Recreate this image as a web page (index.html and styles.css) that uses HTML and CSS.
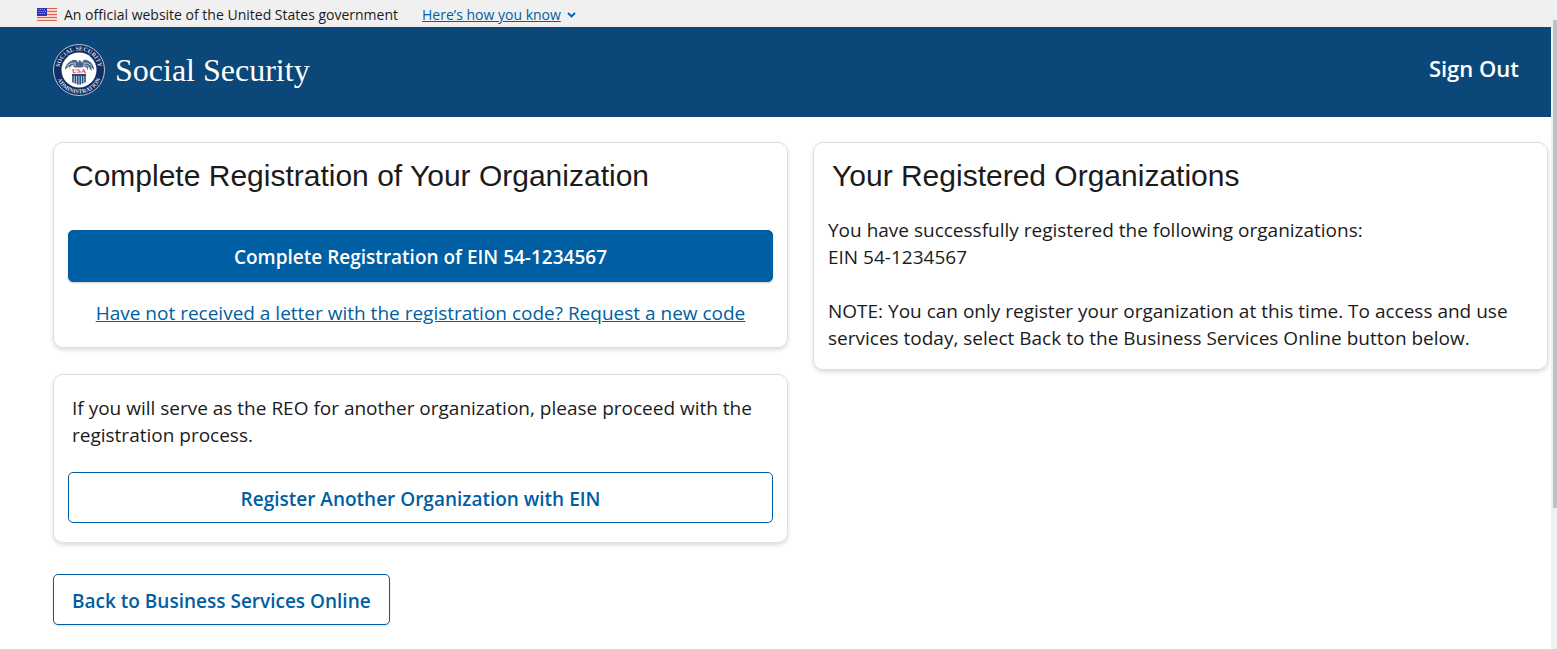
FILE: index.html
```html
<!DOCTYPE html>
<html lang="en">
<head>
    <meta charset="utf-8">
    <meta name="viewport" content="width=device-width, initial-scale=1">
    <title>Social Security</title>
    <link rel="stylesheet" href="styles.css">
</head>
<body>
  <div class="page">
    <div class="gov-banner">
      <svg class="flag" viewBox="0 0 20 13" aria-hidden="true">
        <rect width="20" height="13" fill="#fbd5cf"/>
        <path d="M0 .5h20M0 3.500h20M0 6.500h20M0 9.500h20M0 12.500h20" stroke="#e0604c"/>
        <rect width="10" height="8" fill="#2d36b8"/>
        <path d="M1 1.500h8M2 3.500h7M1 5.500h8" stroke="#8f95dc" stroke-dasharray="1 1"/>
      </svg>
      <span>An official website of the United States government</span>
      <button type="button" class="gov-link"><span>Here’s how you know</span>
        <svg class="chevron" viewBox="0 0 9 6" aria-hidden="true"><path d="M1 1l3.500 3.500L8 1" fill="none" stroke="#005ea2" stroke-width="1.800"/></svg>
      </button>
    </div>

    <header class="header">
      <a class="brand" href="#">
        <svg class="seal" viewBox="0 0 52 52" aria-hidden="true">
          <defs>
            <path id="arc-top" d="M6.500 26a19.500 19.500 0 0 1 39 0"/>
            <path id="arc-bottom" d="M2.500 26a23.500 23.500 0 0 0 47 0"/>
          </defs>
          <circle cx="26" cy="26" r="25.500" fill="#112e62" stroke="#b4c2d5"/>
          <circle cx="26" cy="26" r="17.500" fill="#fff"/>
          <text class="seal-ring"><textPath href="#arc-top" startOffset="50%" text-anchor="middle">SOCIAL SECURITY</textPath></text>
          <text class="seal-ring"><textPath href="#arc-bottom" startOffset="50%" text-anchor="middle">ADMINISTRATION</textPath></text>
          <!-- eagle -->
          <path d="M12 26q0-7 8-10 4-1 5 3l1-3 2 1 1 2q1-4 5-3 7 3 7 10l-3-3 1 4-4-4v3l-4-4-2 2h-7l-3-3-3 4v-3l-4 4 1-4z" fill="#47658a"/>
          <path d="M14 22q4-4 9-3M16 24q4-4 7-3M39 22q-4-4-9-3M37 24q-4-4-7-3" fill="none" stroke="#dbe3ec" stroke-width=".800"/>
          <!-- shield -->
          <path d="M19 29h14v9q-3 2-7 3-4-1-7-3z" fill="#d3dce7"/>
          <path d="M20 30v8.500M22.400 30v9.500M24.800 30v10.500M27.200 30v10.500M29.600 30v9.500M32 30v8.500" stroke="#234a78" stroke-width="1.500"/>
          <path d="M19 31h14" stroke="#234a78" stroke-width="2"/>
          <rect x="18" y="23.500" width="16" height="6" fill="#fff"/>
          <text class="seal-usa" x="26" y="29" text-anchor="middle">USA</text>
        </svg>
        <span>Social Security</span>
      </a>
      <a class="sign-out" href="#">Sign Out</a>
    </header>

    <main class="content">
      <div class="column">
        <section class="card">
          <h2>Complete Registration of Your Organization</h2>
          <button type="button" class="btn btn-primary">Complete Registration of EIN 54-1234567</button>
          <a class="code-link" href="#">Have not received a letter with the registration code? Request a new code</a>
        </section>
        <section class="card">
          <p class="intro">If you will serve as the REO for another organization, please proceed with the registration process.</p>
          <button type="button" class="btn">Register Another Organization with EIN</button>
        </section>
        <button type="button" class="btn btn-back">Back to Business Services Online</button>
      </div>

      <div class="column">
        <section class="card card-list">
          <h2>Your Registered Organizations</h2>
          <p>You have successfully registered the following organizations:<br>EIN 54-1234567</p>
          <p class="note">NOTE: You can only register your organization at this time. To access and use services today, select Back to the Business Services Online button below.</p>
        </section>
      </div>
    </main>
  </div>

  <div class="scrollbar" aria-hidden="true"><div class="thumb"></div></div>
</body>
</html>
```
FILE: styles.css
```css
*{
    box-sizing: border-box;
}
body{
    margin: 0;
    display: flex;
    min-height: 100vh;
    background: #fff;
    color: #1b1b1b;
    font-family: "Open Sans", "Segoe UI", sans-serif;
    font-size: 19px;
    line-height: 27px;
}
.page{
    flex: 1;
    min-width: 0;
}
button{
    font-family: inherit;
    cursor: pointer;
}
p{
    margin: 0;
}

.gov-banner{
    display: flex;
    align-items: center;
    height: 27px;
    padding: 2px 37px 0;
    background: #f0f0f0;
    font-size: 14px;
}
.flag{
    width: 20px;
    height: 13px;
    margin-right: 7px;
}
.gov-link{
    display: flex;
    align-items: center;
    gap: 6px;
    margin-left: 24px;
    padding: 0;
    border: 0;
    background: none;
    color: #005ea2;
    font-size: 14px;
    text-decoration: underline;
}
.chevron{
    width: 9px;
    height: 6px;
}

.header{
    display: flex;
    justify-content: space-between;
    align-items: center;
    height: 90px;
    padding: 0 32px 4px 53px;
    background: #0b4778;
}
.header a{
    color: #fff;
    text-decoration: none;
}
.brand{
    display: flex;
    align-items: center;
    gap: 10px;
    font-family: Georgia, "Liberation Serif", serif;
    font-size: 32px;
}
.seal{
    width: 52px;
    height: 52px;
}
.seal-ring{
    fill: #d5dce8;
    font: bold 6px "Liberation Serif", serif;
}
.seal-usa{
    fill: #e0304a;
    font: bold 7px "Liberation Serif", serif;
}
.sign-out{
    padding-bottom: 4px;
    font-size: 22px;
    font-weight: 600;
}

.content{
    display: grid;
    grid-template-columns: 1fr 1fr;
    gap: 25px;
    padding: 25px 3px 24px 53px;
}
.column{
    display: flex;
    flex-direction: column;
    align-items: flex-start;
    gap: 26px;
}
.card{
    width: 100%;
    padding: 14px 14px 19px;
    border: 1px solid #dcdee0;
    border-radius: 10px;
    box-shadow: 0 2px 4px rgba(0,0,0,.15);
}
.card-list{
    padding-bottom: 17px;
}
.card h2{
    margin: 0 4px 35px;
    font-family: "Liberation Sans", Arial, sans-serif;
    font-size: 30px;
    font-weight: 400;
    line-height: 38px;
}
.card-list h2{
    margin-bottom: 22px;
}
.btn{
    width: 100%;
    height: 51px;
    padding: 2px 18px 0;
    border: 1px solid #005ea2;
    border-radius: 5px;
    background: #fff;
    color: #005ea2;
    font-size: 19px;
    font-weight: 600;
}
.btn-primary{
    height: 52px;
    background: #005ea2;
    color: #fff;
    box-shadow: 0 1px 2px rgba(0,0,0,.2);
}
.btn-back{
    width: auto;
    margin-top: 5px;
    box-shadow: 0 1px 2px rgba(0,0,0,.15);
}
.code-link{
    display: block;
    margin-top: 18px;
    padding-bottom: 1px;
    color: #005ea2;
    text-align: center;
}
.intro{
    margin: 6px 4px 23px;
}
.note{
    margin-top: 27px;
}

.scrollbar{
    width: 6px;
    padding: 20px 0 0 2px;
    background: #f0f0f0;
}
.thumb{
    height: 488px;
    background: #c1c1c1;
}
```
